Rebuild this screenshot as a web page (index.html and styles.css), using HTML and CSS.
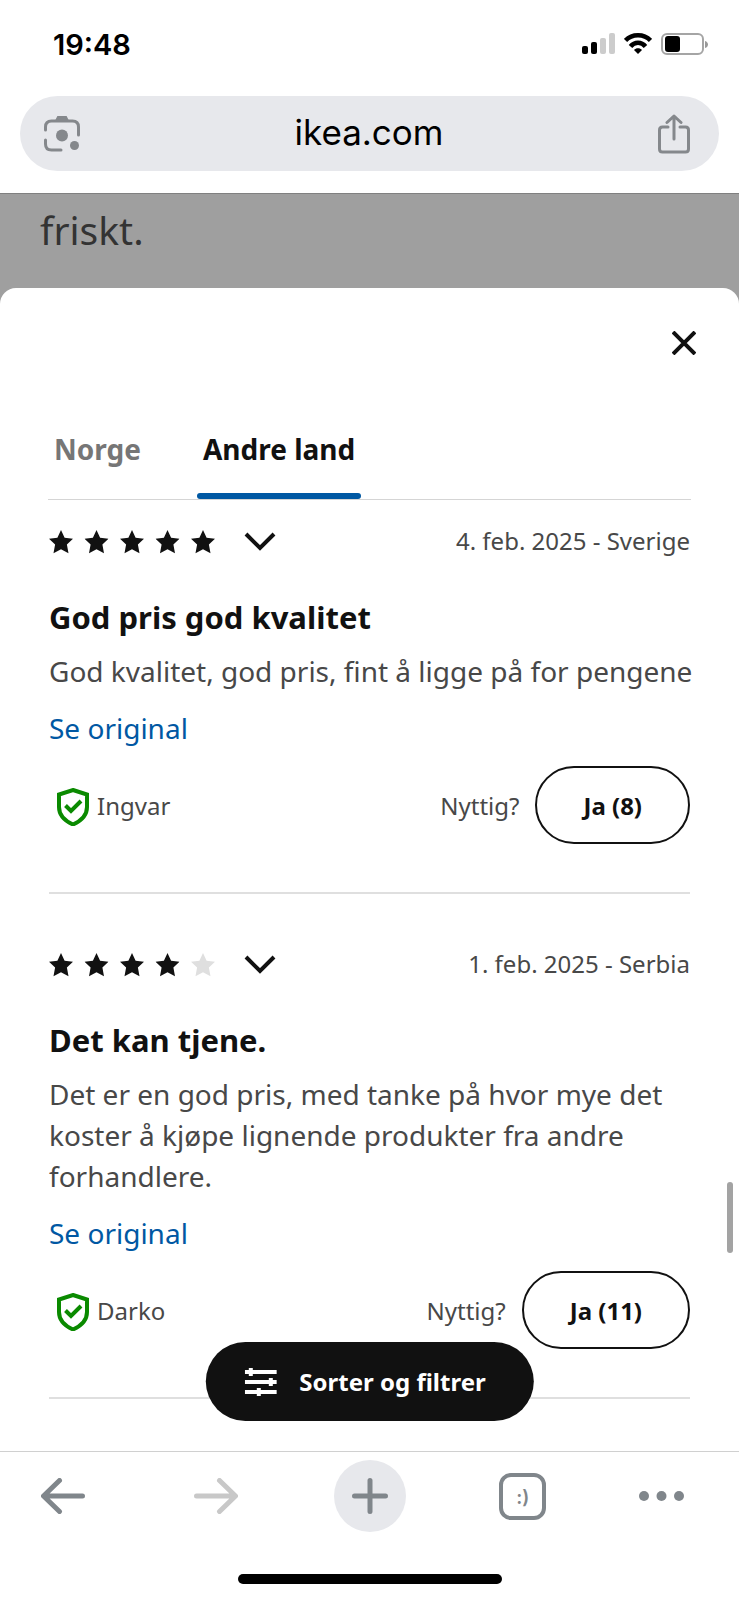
FILE: index.html
```html
<!DOCTYPE html>
<html lang="no">
  <head>
    <meta charset="utf-8">
    <meta name="viewport" content="width=device-width, initial-scale=1.0">
    <title>ikea.com</title>
    <link rel="stylesheet" href="styles.css">
  </head>
  <body>
    <!-- shared icons -->
    <svg class="sprite" aria-hidden="true">
      <symbol id="star" viewBox="0 0 24 24">
        <path d="M12 0l3.6 7.7 8.4 1.1-6.1 5.8 1.6 8.6L12 19.2l-7.5 4 1.6-8.6L0 8.8l8.4-1.1z" />
      </symbol>
      <symbol id="chevron" viewBox="0 0 32 20">
        <path d="M2 2l14 14L30 2" fill="none" stroke="currentColor" stroke-width="4" />
      </symbol>
      <symbol id="shield" viewBox="0 0 32 38">
        <path d="M16 2l14 4.500v12.500c0 7.500-5 13.500-14 17.500C7 32.500 2 26.500 2 19V6.500z" fill="none" stroke="currentColor" stroke-width="4" />
        <path d="M8.500 17.500l5.500 5.500 10-10" fill="none" stroke="currentColor" stroke-width="4" />
      </symbol>
    </svg>

    <header class="browser-top">
      <div class="status-bar">
        <span class="time">19:48</span>
        <div class="status-icons">
          <svg width="34" height="22" viewBox="0 0 34 22">
            <rect x="1" y="13" width="6" height="8" rx="2" />
            <rect x="10" y="9" width="6" height="12" rx="2" />
            <rect x="19" y="5" width="6" height="16" rx="2" fill="#ccc" />
            <rect x="28" y="0" width="6" height="21" rx="2" fill="#ccc" />
          </svg>
          <svg width="28" height="22" viewBox="0 0 28 22">
            <path d="M1.500 7.500C8 .5 20 .5 26.500 7.500M6.500 13.500c4-5 11-5 15 0" fill="none" stroke="#000" stroke-width="4.500" />
            <path d="M14 21l-4-4c2-2.200 6-2.200 8 0z" />
          </svg>
          <svg width="48" height="22" viewBox="0 0 48 22">
            <rect x="1" y="1" width="41" height="20" rx="5" fill="none" stroke="#a5a5a5" stroke-width="2" />
            <rect x="4" y="3" width="15" height="16" rx="3" />
            <path d="M44 8c4 1 4 6 0 7z" fill="#999" />
          </svg>
        </div>
      </div>
      <div class="address-bar">
        <button type="button" class="icon-button" aria-label="Lens">
          <svg width="36" height="37" viewBox="0 0 36 37" fill="none" stroke="currentColor" stroke-width="3" stroke-linecap="round">
            <path d="M1.500 15v-3q0-6 6-6h21q6 0 6 6v8M1.500 25v4q0 6 6 6H17" />
            <path d="M12 6l2-4h8l2 4z" fill="currentColor" stroke-width="2" />
            <circle cx="18" cy="20.500" r="6" fill="currentColor" stroke="none" />
            <circle cx="30.500" cy="30.500" r="4.500" fill="currentColor" stroke="none" />
          </svg>
        </button>
        <span class="address">ikea.com</span>
        <button type="button" class="icon-button" aria-label="Del">
          <svg width="32" height="40" viewBox="0 0 32 40" fill="none" stroke="currentColor" stroke-width="3" stroke-linecap="round" stroke-linejoin="round">
            <path d="M10 13H4.500q-3 0-3 3v19q0 3 3 3h23q3 0 3-3V16q0-3-3-3H22M16 25V2M9 8.500L16 2l7 6.500" />
          </svg>
        </button>
      </div>
    </header>

    <main class="page">
      <p class="behind">friskt.</p>

      <section class="sheet">
        <div class="sheet-top">
          <button type="button" class="close" aria-label="Lukk">
            <svg width="24" height="24" viewBox="0 0 24 24">
              <path d="M1 1l22 22M23 1L1 23" stroke="currentColor" stroke-width="4" />
            </svg>
          </button>
        </div>

        <div class="tabs" role="tablist">
          <button type="button" class="tab" role="tab" aria-selected="false">Norge</button>
          <button type="button" class="tab active" role="tab" aria-selected="true">Andre land</button>
        </div>

        <article class="review">
          <div class="review-top">
            <button type="button" class="rating" aria-label="5 av 5">
              <svg width="166" height="24" viewBox="0 0 166 24">
                <use href="#star" x="0" width="24" height="24" />
                <use href="#star" x="35.500" width="24" height="24" />
                <use href="#star" x="71" width="24" height="24" />
                <use href="#star" x="106.500" width="24" height="24" />
                <use href="#star" x="142" width="24" height="24" />
              </svg>
              <svg width="32" height="20"><use href="#chevron" /></svg>
            </button>
            <span class="date">4. feb. 2025 - Sverige</span>
          </div>
          <h2>God pris god kvalitet</h2>
          <p class="text">God kvalitet, god pris, fint å ligge på for pengene</p>
          <a href="#" class="original">Se original</a>
          <div class="review-bottom">
            <svg class="verified" width="32" height="38"><use href="#shield" /></svg>
            <span class="author">Ingvar</span>
            <span>Nyttig?</span>
            <button type="button" class="vote">Ja (8)</button>
          </div>
        </article>

        <article class="review">
          <div class="review-top">
            <button type="button" class="rating" aria-label="4 av 5">
              <svg width="166" height="24" viewBox="0 0 166 24">
                <use href="#star" x="0" width="24" height="24" />
                <use href="#star" x="35.500" width="24" height="24" />
                <use href="#star" x="71" width="24" height="24" />
                <use href="#star" x="106.500" width="24" height="24" />
                <use href="#star" x="142" width="24" height="24" fill="#dfdfdf" />
              </svg>
              <svg width="32" height="20"><use href="#chevron" /></svg>
            </button>
            <span class="date">1. feb. 2025 - Serbia</span>
          </div>
          <h2>Det kan tjene.</h2>
          <p class="text">Det er en god pris, med tanke på hvor mye det koster å kjøpe lignende produkter fra andre forhandlere.</p>
          <a href="#" class="original">Se original</a>
          <div class="review-bottom">
            <svg class="verified" width="32" height="38"><use href="#shield" /></svg>
            <span class="author">Darko</span>
            <span>Nyttig?</span>
            <button type="button" class="vote">Ja (11)</button>
          </div>
        </article>

        <div class="scrollbar"></div>
        <button type="button" class="filter">
          <svg width="32" height="28" viewBox="0 0 32 28">
            <path d="M0 4h32M0 14h32M0 24h32" stroke="currentColor" stroke-width="4" />
            <path d="M6 0v8M26 10v8M14 20v8" stroke="currentColor" stroke-width="4" />
          </svg>
          Sorter og filtrer
        </button>
      </section>
    </main>

    <footer class="browser-bottom">
      <nav class="toolbar">
        <button type="button" class="tool" aria-label="Tilbake">
          <svg width="44" height="36" viewBox="0 0 44 36">
            <path d="M41.500 18H3M18.500 2.500L2.500 18l16 15.500" />
          </svg>
        </button>
        <button type="button" class="tool disabled" aria-label="Frem" disabled>
          <svg width="44" height="36" viewBox="0 0 44 36">
            <path d="M2.500 18H41M25.500 2.500l16 15.500-16 15.500" />
          </svg>
        </button>
        <button type="button" class="tool new-tab" aria-label="Ny fane">
          <svg width="36" height="36" viewBox="0 0 36 36">
            <path d="M18 2.500v31M2.500 18h31" />
          </svg>
        </button>
        <button type="button" class="tool" aria-label="Faner">
          <span class="tab-count">:)</span>
        </button>
        <button type="button" class="tool menu" aria-label="Meny">
          <svg width="46" height="10" viewBox="0 0 46 10">
            <g fill="currentColor" stroke="none">
              <circle cx="5" cy="5" r="5" />
              <circle cx="22.500" cy="5" r="5" />
              <circle cx="40" cy="5" r="5" />
            </g>
          </svg>
        </button>
      </nav>
      <div class="home-indicator"></div>
    </footer>
  </body>
</html>
```
FILE: styles.css
```css
* {
  box-sizing: border-box;
}

body {
  margin: 0;
  min-height: 100vh;
  display: flex;
  flex-direction: column;
  font-family: "Noto Sans", sans-serif;
  color: #484848;
  background-color: #fff;
}

button {
  padding: 0;
  border: none;
  background: none;
  color: #111;
  font-family: inherit;
  cursor: pointer;
}

svg {
  display: block;
  flex-shrink: 0;
}

h2,
p {
  margin: 0;
}

.sprite {
  position: absolute;
  width: 0;
  height: 0;
}

/* browser top */
.browser-top {
  padding: 0 20px 22px;
  border-bottom: 1px solid #808080;
  font-family: Inter, sans-serif;
  color: #000;
}

.status-bar {
  height: 96px;
  padding: 0 10px 8px 33px;
  display: flex;
  align-items: center;
  justify-content: space-between;
}

.time {
  font-size: 29px;
  font-weight: 600;
}

.status-icons {
  display: flex;
  gap: 9px;
}

.address-bar {
  height: 75px;
  padding: 0 29px 0 24px;
  display: flex;
  align-items: center;
  justify-content: space-between;
  border-radius: 38px;
  background-color: #e7e8ec;
}

.address {
  padding-bottom: 4px;
  font-size: 35px;
}

.icon-button {
  color: #85888c;
}

/* page */
.page {
  flex: 1;
  display: flex;
  flex-direction: column;
  background-color: #9f9f9f;
}

.behind {
  padding: 8px 40px 30px;
  font-size: 39px;
  line-height: 56px;
  color: #333;
}

.sheet {
  position: relative;
  flex: 1;
  padding: 0 49px;
  border-radius: 16px 16px 0 0;
  background-color: #fff;
}

.sheet-top {
  height: 112px;
  padding-top: 43px;
  display: flex;
  align-items: flex-start;
  justify-content: flex-end;
}

.close {
  margin-right: -6px;
}

.tabs {
  height: 100px;
  margin: 0 -1px;
  display: flex;
  gap: 50px;
  border-bottom: 1px solid #d5d5d5;
}

.tab {
  padding: 4px 6px 0;
  border-bottom: 6px solid transparent;
  font-size: 28px;
  font-weight: 700;
  color: #767676;
}

.tab.active {
  position: relative;
  color: #111;
}

.tab.active::after {
  content: "";
  position: absolute;
  left: 0;
  right: 0;
  bottom: -6px;
  height: 6px;
  border-radius: 3px;
  background-color: #0058a3;
}

/* reviews */
.review {
  padding-bottom: 48px;
  border-bottom: 2px solid #dfdfdf;
}

.review + .review {
  padding-top: 29px;
}

.review-top {
  height: 84px;
  margin-bottom: 9px;
  display: flex;
  align-items: center;
  justify-content: space-between;
}

.rating {
  display: flex;
  align-items: center;
  gap: 29px;
  fill: #111;
}

.date,
.review-bottom {
  font-size: 24px;
}

.date {
  padding-bottom: 4px;
}

h2 {
  font-size: 31px;
  line-height: 48px;
  font-weight: 700;
  color: #111;
}

.text,
.original {
  font-size: 28px;
  line-height: 41px;
}

.text {
  margin: 10px -8px 16px 0;
}

.original {
  display: block;
  color: #0058a3;
  text-decoration: none;
}

.review-bottom {
  margin-top: 17px;
  padding-left: 8px;
  display: flex;
  align-items: center;
}

.verified {
  margin-top: 4px;
  color: #0a8a00;
}

.author {
  flex: 1;
  margin-left: 8px;
}

.vote {
  height: 78px;
  margin-left: 16px;
  padding: 0 46px;
  border: 2px solid #111;
  border-radius: 39px;
  font-size: 24px;
  font-weight: 700;
}

.filter {
  position: absolute;
  bottom: 30px;
  left: 50%;
  transform: translateX(-50%);
  height: 79px;
  padding: 0 48px 0 39px;
  display: flex;
  align-items: center;
  gap: 23px;
  border-radius: 40px;
  background-color: #111;
  color: #fff;
  font-size: 24px;
  font-weight: 700;
  white-space: nowrap;
}

.scrollbar {
  position: absolute;
  right: 6px;
  bottom: 198px;
  width: 6px;
  height: 71px;
  border-radius: 3px;
  background-color: #a3a3a3;
}

/* browser bottom */
.browser-bottom {
  padding-bottom: 16px;
  border-top: 1px solid #d0d0d0;
}

.toolbar {
  padding: 8px 55px 0 27px;
  display: flex;
  align-items: center;
  justify-content: space-between;
}

.tool {
  width: 72px;
  height: 72px;
  display: flex;
  align-items: center;
  justify-content: center;
  color: #80868b;
}

.tool svg {
  fill: none;
  stroke: currentColor;
  stroke-width: 5;
  stroke-linecap: round;
  stroke-linejoin: round;
}

.disabled {
  color: #c8c8c8;
}

.new-tab {
  border-radius: 50%;
  background-color: #e7e8ec;
}

.menu {
  width: 44px;
}

.tab-count {
  width: 47px;
  height: 47px;
  border: 4px solid #80868b;
  border-radius: 12px;
  font-family: Inter, sans-serif;
  font-size: 19px;
  font-weight: 600;
  line-height: 41px;
}

.home-indicator {
  width: 264px;
  height: 10px;
  margin: 42px auto 0;
  border-radius: 5px;
  background-color: #000;
}
```
